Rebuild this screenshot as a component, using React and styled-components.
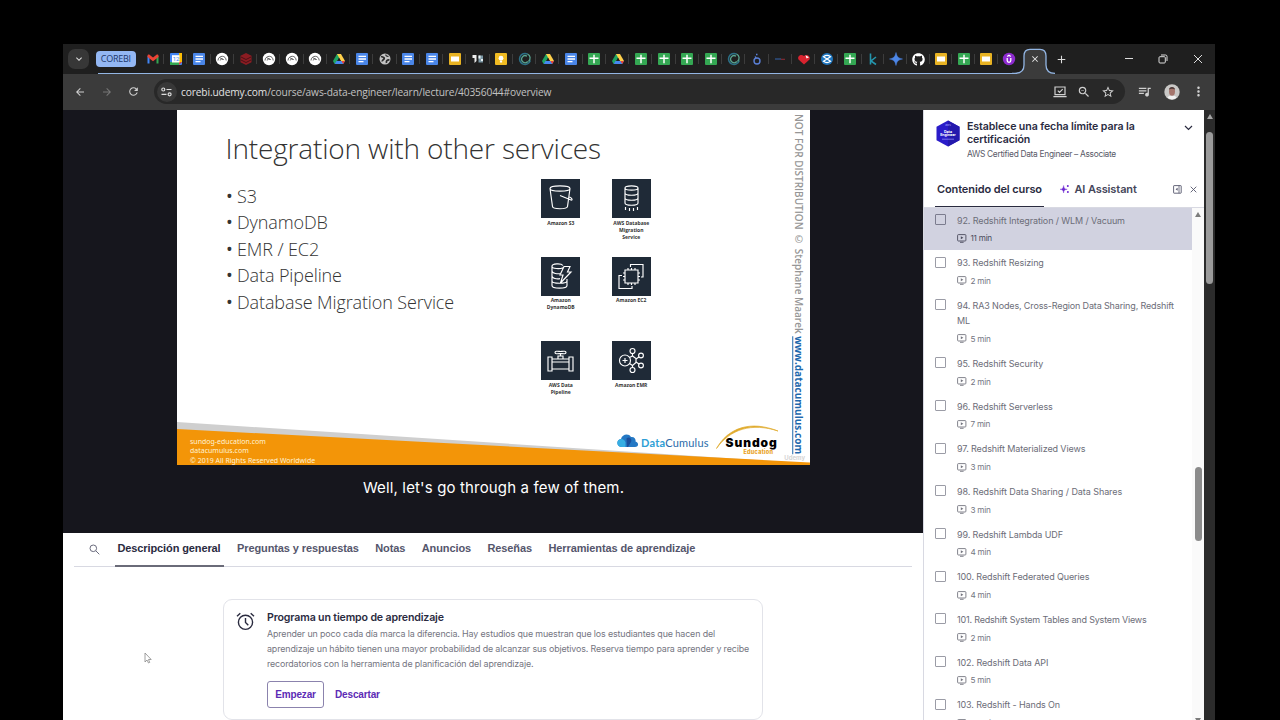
import styled, { createGlobalStyle, css } from "styled-components"
import { FaGithub } from "react-icons/fa"
import {
  MdArrowBack, MdArrowForward, MdRefresh, MdZoomOut, MdStarOutline,
  MdQueueMusic, MdMoreVert, MdKeyboardArrowDown, MdAdd, MdClose,
} from "react-icons/md"

const abas = [
  "gmail", "agenda", "doc", "copa", "cubo", "copa", "copa", "copa", "drive", "doc",
  "globo", "doc", "doc", "slides", "foto", "keep", "espiral", "drive", "doc", "sheet",
  "drive", "sheet", "sheet", "sheet", "sheet", "espiral", "looker", "linha", "coracao", "onda",
  "sheet", "kaggle", "gemini", "github", "slides", "sheet", "slides", "udemy",
]

const aulas = [
  { titulo: "92. Redshift Integration / WLM / Vacuum", min: "11 min", ativa: true },
  { titulo: "93. Redshift Resizing", min: "2 min" },
  { titulo: "94. RA3 Nodes, Cross-Region Data Sharing, Redshift ML", min: "5 min", esp: "-0.150px" },
  { titulo: "95. Redshift Security", min: "2 min" },
  { titulo: "96. Redshift Serverless", min: "7 min" },
  { titulo: "97. Redshift Materialized Views", min: "3 min" },
  { titulo: "98. Redshift Data Sharing / Data Shares", min: "3 min", esp: "-0.070px" },
  { titulo: "99. Redshift Lambda UDF", min: "4 min" },
  { titulo: "100. Redshift Federated Queries", min: "4 min" },
  { titulo: "101. Redshift System Tables and System Views", min: "2 min", esp: "-0.190px" },
  { titulo: "102. Redshift Data API", min: "5 min" },
  { titulo: "103. Redshift - Hands On", min: "22 min" },
]

const secoes = [
  { nome: "Descripción general", ativa: true },
  { nome: "Preguntas y respuestas" },
  { nome: "Notas" },
  { nome: "Anuncios" },
  { nome: "Reseñas" },
  { nome: "Herramientas de aprendizaje" },
]

const servicos = [
  { icone: "s3", nome: "Amazon S3" },
  { icone: "dms", nome: "AWS Database Migration Service" },
  { icone: "dynamo", nome: "Amazon DynamoDB" },
  { icone: "ec2", nome: "Amazon EC2" },
  { icone: "pipeline", nome: "AWS Data Pipeline" },
  { icone: "emr", nome: "Amazon EMR" },
]

const favicons = {
  gmail: (
    <>
      <path d="M1.500 11.500V4l2 1.200v6.300z" fill="#4285f4" />
      <path d="M10.500 11.500V5.200l2-1.200v7.500z" fill="#34a853" />
      <path d="M1.500 4c0-1.500 1.400-1.800 2.300-1L7 5.500 10.200 3c.9-.8 2.300-.5 2.300 1v1L7 9.200 1.500 5z" fill="#ea4335" />
    </>
  ),
  agenda: (
    <>
      <rect x="1" y="1" width="12" height="12" rx="1" fill="#4285f4" />
      <path d="M10 1h3v9h-3z" fill="#fbbc04" />
      <path d="M1 10h9v3H1z" fill="#34a853" />
      <path d="M10 10h3l-3 3z" fill="#ea4335" />
      <rect x="3" y="3.200" width="7.500" height="7.300" fill="#fff" />
      <text x="3.700" y="9.200" fontSize="6" fill="#4285f4" fontFamily="Roboto, sans-serif">12</text>
    </>
  ),
  doc: (
    <>
      <rect x="1" y="1" width="12" height="12" rx="1" fill="#4a86e8" />
      <path d="M3.500 4.300h7.500M3.500 7h7.500M3.500 9.700h5" stroke="#fff" strokeWidth="1.300" />
    </>
  ),
  copa: (
    <>
      <circle cx="7" cy="7" r="6.200" fill="#fff" />
      <path d="M3 8.500C3 6 5 4.300 7.300 4.300S11 6 11.200 8.500M5.200 8.500c.3-2 2.600-2.300 3.600-.5M4.500 5.500L8 7.500" fill="none" stroke="#555" strokeWidth="0.900" />
    </>
  ),
  cubo: (
    <>
      <path d="M7 1l5.500 2.800v6.400L7 13l-5.500-2.800V3.800z" fill="#8c1c22" />
      <path d="M2 5l5 2.500L12 5M2 8l5 2.500L12 8" fill="none" stroke="#4a1116" strokeWidth="1" />
    </>
  ),
  drive: (
    <>
      <path d="M5 2h4L4.500 10.500 2.600 12 1 9z" fill="#1fa463" />
      <path d="M5 2h4l4 7H9z" fill="#ffd04b" />
      <path d="M4.500 9H13l-1.800 3H2.700z" fill="#4688f1" />
      <path d="M9.500 9H13l-1.800 3z" fill="#ea4335" />
      <path d="M7 6l1.700 3H5.300z" fill="#1f1f1f" />
    </>
  ),
  globo: (
    <>
      <circle cx="7" cy="7" r="5.500" fill="#c4c4c4" />
      <path d="M3 4.500c2 .5 3.500.5 3.200 2S4 7.500 4.300 9.500M8.500 11c-.5-2 .5-3.300 3-3" fill="none" stroke="#2c2c2c" strokeWidth="1.700" />
      <path d="M8 2.500c-.5 1.500 1 2 2.500 1.800" fill="none" stroke="#2c2c2c" strokeWidth="1.300" />
    </>
  ),
  slides: (
    <>
      <rect x="1" y="1" width="12" height="12" rx="1" fill="#e8b323" />
      <rect x="3" y="4.500" width="8" height="5" fill="#fff" />
    </>
  ),
  foto: (
    <>
      <path d="M1.500 3h4v6l-2 2V6h-2z" fill="#eee" />
      <path d="M7.500 3.500h4.500v7H7.500z" fill="#7c98a5" />
      <path d="M7.500 3.500h2v3h-2zM10 7h2v2h-2z" fill="#e9f1f4" />
    </>
  ),
  keep: (
    <>
      <rect x="1" y="1" width="12" height="12" rx="1" fill="#f0bb22" />
      <circle cx="7" cy="6.200" r="2.400" fill="#fff" />
      <path d="M5.900 8.600h2.200v1.900H5.900z" fill="#fff" />
    </>
  ),
  espiral: (
    <>
      <path d="M9.500 2A5.500 5.500 0 1 0 12.300 8.500" fill="none" stroke="#2b6f86" strokeWidth="1.500" />
      <path d="M9 4.200A3.500 3.500 0 1 0 9.800 9.500M9.500 2c3 1.500 3.500 5 1 7.500" fill="none" stroke="#5aa590" strokeWidth="1.300" />
    </>
  ),
  sheet: (
    <>
      <rect x="1" y="1" width="12" height="12" rx="1" fill="#34a853" />
      <path d="M2.500 6.200h9M7 2.800v8.400" stroke="#fff" strokeWidth="1.500" />
    </>
  ),
  looker: (
    <>
      <circle cx="7" cy="9" r="3" fill="none" stroke="#5a7fd6" strokeWidth="1.400" />
      <path d="M6 6.200L5.200 4.500M6 2.500h1.500" stroke="#5a7fd6" strokeWidth="1.500" />
    </>
  ),
  linha: (
    <>
      <path d="M2 7h6" stroke="#31568f" strokeWidth="1.300" />
      <path d="M8 7.300h4" stroke="#8a2d36" strokeWidth="1.100" />
    </>
  ),
  coracao: (
    <>
      <path d="M7 12.500L1.500 7.500C0 4.500 3.500 1.500 7 4c3-2.500 7 .5 5.500 3.500z" fill="#d8232f" />
      <path d="M8.500 3.200l3.500 2L9.500 6.500z" fill="#fff" />
    </>
  ),
  onda: (
    <>
      <circle cx="7" cy="7" r="6" fill="#1f77c0" />
      <path d="M3.500 4.800c2-1.500 5-1.500 7 0L7 7zM3.500 9.200c2 1.500 5 1.500 7 0L7 7z" fill="none" stroke="#fff" strokeWidth="1.200" />
    </>
  ),
  kaggle: <path d="M4.500 1.500v11M10 5L5 9l5 3.500" fill="none" stroke="#2596ad" strokeWidth="1.600" />,
  gemini: <path d="M7 .5C7.900 4.800 9.200 6.100 13.500 7 9.200 7.900 7.900 9.200 7 13.500 6.100 9.200 4.800 7.900.5 7 4.800 6.100 6.100 4.800 7 .5z" fill="#4d87e8" stroke="#4d87e8" strokeWidth="0.500" />,
  udemy: (
    <>
      <circle cx="7" cy="7" r="6.200" fill="#8e2bd0" />
      <path d="M5.200 6v2.500c0 2.400 3.600 2.400 3.600 0V6M5.200 4.500L7 3.300l1.800 1.200" fill="none" stroke="#fff" strokeWidth="1.300" />
    </>
  ),
}

const desenhos = {
  s3: <path d="M9 9.500l2.500 18c.2 3 14.500 3 15 0L29 9.500M9 9.500c0-3.500 20-3.500 20 0s-20 3.500-20 0zM19 16.500l11 4.500c2 .6 1-2-1.500-3" />,
  dms: <path d="M13 9c0-2.800 13-2.800 13 0s-13 2.800-13 0zv15c0 3 13 3 13 0V9M13 14c0 3 13 3 13 0M13 19c0 3 13 3 13 0M13.500 28v3M17.500 29v3M21.500 29v3M25.500 28v3" />,
  dynamo: <path d="M22 8.500c-2-2.500-11-2-11 .7s8 3 11 1.500M11 9v19.500c0 3.500 15 3.500 15 0V22M11 14c0 2.500 6 3.200 9 2.500M11 19c0 2.500 5 3.200 8 2.600M11 24c0 3 15 3 15 0M23 9.500h6L26.500 15H30L19.500 26l2.500-8h-3z" />,
  ec2: <path d="M13 13h13v13H13zM16 13v-2M19.500 13v-2M23 13v-2M16 28v-2M19.500 28v-2M23 28v-2M13 16h-2M13 19.500h-2M13 23h-2M28 16h-2M28 19.500h-2M28 23h-2M18.500 10V7.500H31V20h-2M10 18.500H7v13h13V29" />,
  pipeline: <path d="M7 16h4v14H7zM28 16h4v14h-4zM11 18h17M11 28h17M11 21h17M17 18v-3h5v3M19.500 15v-3M14 11.500c0-2 4-1 5.500-1s5.500-1 5.500 1-4 1-5.500 1-5.500 1-5.500-1z" />,
  emr: <><circle cx="13" cy="19.500" r="5.500" /><path d="M13 17v5M10.500 19.500h5M20.500 12.500v2.500M20.500 24.500v2M24 18l3-2M24 21l3 2" /><path d="M17.500 16.500l3-1.500 3.500 2.500v4L20.500 24.500l-3-2" /><circle cx="20.500" cy="10" r="2.500" /><circle cx="20.500" cy="29" r="2.500" /><circle cx="29" cy="14.500" r="2.400" /><circle cx="29" cy="24.500" r="2.400" /></>,
}

function Favicon({ tipo }) {
  if (tipo === "github") return <FaGithub size={13} color="#fff" />
  return <svg width="14" height="14" viewBox="0 0 14 14">{favicons[tipo]}</svg>
}

function IconeVideo() {
  return (
    <svg width="10" height="9" viewBox="0 0 10 9" fill="none" stroke="currentColor">
      <rect x="0.600" y="0.600" width="8.300" height="6.400" rx="0.800" strokeWidth="0.900" />
      <path d="M3.800 2.300v3l2.600-1.500z" fill="currentColor" stroke="none" />
      <path d="M3 8.300h3.600" strokeWidth="0.900" />
    </svg>
  )
}

function Navegador() {
  return (
    <>
      <FaixaAbas>
        <BotaoBusca><MdKeyboardArrowDown size={12} /></BotaoBusca>
        <Grupo>COREBI</Grupo>
        <ListaAbas>
          {abas.map((tipo, i) => (
            <Aba key={i}><Favicon tipo={tipo} /></Aba>
          ))}
        </ListaAbas>
        <AbaAtiva>
          <Contorno width="46" height="26" viewBox="0 0 46 26">
            <path d="M0 25.300H3Q12 25.300 12 17V8Q12 1.300 18 1.300H28Q34 1.300 34 8V17Q34 25.300 43 25.300V26H0z" fill="#3b3b3b" />
            <path d="M0 25.300H3Q12 25.300 12 17V8Q12 1.300 18 1.300H28Q34 1.300 34 8V17Q34 25.300 43 25.300" fill="none" stroke="#93b6e4" strokeWidth="1.300" />
          </Contorno>
          <Fechar size={10} />
        </AbaAtiva>
        <NovaAba><MdAdd size={13} /></NovaAba>
        <Janela>
          <svg width="10" height="10" viewBox="0 0 10 10"><path d="M1 4.500h8" stroke="#ddd" /></svg>
          <svg width="10" height="10" viewBox="0 0 10 10" fill="none" stroke="#ddd">
            <rect x="1" y="2.700" width="6.300" height="6.300" rx="1" />
            <path d="M3 1h4.500Q9 1 9 2.500V7" />
          </svg>
          <svg width="10" height="10" viewBox="0 0 10 10"><path d="M1 1l8 8M9 1l-8 8" stroke="#ddd" /></svg>
        </Janela>
      </FaixaAbas>
      <BarraEndereco>
        <Navegacao>
          <MdArrowBack size={12} />
          <MdArrowForward size={12} color="#777" />
          <MdRefresh size={13} />
        </Navegacao>
        <Endereco>
          <Site>
            <svg width="11" height="10" viewBox="0 0 11 10" fill="none" stroke="#ddd" strokeWidth="1.200">
              <circle cx="2.300" cy="2.500" r="1.500" />
              <path d="M5.500 2.500h5M.5 7.300h5" />
              <circle cx="8.600" cy="7.300" r="1.500" />
            </svg>
          </Site>
          <Url><b>corebi.udemy.com</b>/course/aws-data-engineer/learn/lecture/40356044#overview</Url>
          <Acoes>
            <svg width="14" height="12" viewBox="0 0 14 12" fill="none" stroke="#d0d0d0" strokeWidth="1.200">
              <path d="M2 1h10v7.600H2zM.4 10.700h13.200M4.800 4.600L6.500 6.300l3.200-3.200" />
            </svg>
            <MdZoomOut size={14} />
            <MdStarOutline size={14} />
          </Acoes>
        </Endereco>
        <Perfil>
          <MdQueueMusic size={15} />
          <svg width="16" height="16" viewBox="0 0 16 16">
            <circle cx="8" cy="8" r="7.700" fill="#c9c8c6" />
            <path d="M3.500 13.800c1-3 8-3 9 0a7.700 7.700 0 0 1-9 0z" fill="#f1f1f1" />
            <ellipse cx="8" cy="7.500" rx="3" ry="4.200" fill="#a5756c" />
            <path d="M5 5.500C5 2 11 2 11 5.500 9 4.500 7 4.500 5 5.500z" fill="#4b3a38" />
          </svg>
          <MdMoreVert size={15} />
        </Perfil>
      </BarraEndereco>
    </>
  )
}

function Slide() {
  return (
    <SlideCaixa>
      <Faixas width="632" height="43" viewBox="0 0 632 43" preserveAspectRatio="none">
        <path d="M0 0L632 41.500V43H0z" fill="#cfcfcf" />
        <path d="M0 7L632 40.500V43H0z" fill="#f39508" />
      </Faixas>
      <SlideConteudo>
        <SlideTitulo>Integration with other services</SlideTitulo>
        <SlideCorpo>
          <Lista>
            <li>S3</li>
            <li>DynamoDB</li>
            <li>EMR / EC2</li>
            <li>Data Pipeline</li>
            <li>Database Migration Service</li>
          </Lista>
          <Servicos>
            {servicos.map((s) => (
              <Servico key={s.nome}>
                <Quadro>
                  <svg width="39" height="39" viewBox="0 0 39 39" fill="none" stroke="#fff" strokeWidth="1.150">{desenhos[s.icone]}</svg>
                </Quadro>
                <NomeServico>{s.nome}</NomeServico>
              </Servico>
            ))}
          </Servicos>
        </SlideCorpo>
        <SlideRodape>
          <Creditos>
            sundog-education.com<br />datacumulus.com<br />© 2019 All Rights Reserved Worldwide
          </Creditos>
          <Nuvem width="22" height="15" viewBox="0 0 22 15">
            <path d="M5 14C-1 14-1 6.500 4 6 5 1 12 0 14 4c4-.5 5 3 4.500 4.500C22 9.500 22 14 18 14z" fill="#2478c4" />
            <path d="M5 14C-1 14-1 6.500 4 6c2.500 0 4 1.500 4.500 3.500V14z" fill="#36aee3" />
            <path d="M9.500 5.500c2.500-2.500 6 .5 4.500 3.500L11 14h-1z" fill="#1b4f9c" />
          </Nuvem>
          <DataCumulus><b>Data</b>Cumulus</DataCumulus>
          <Sundog>
            <Arco width="64" height="26" viewBox="0 0 64 26">
              <path d="M.5 24.500C12 4 34-4 62 7 36-1.500 14 5 .5 24.500z" fill="#e0ab2c" stroke="#e0ab2c" strokeWidth="0.700" />
            </Arco>
            <strong>Sundog</strong>
            <small>Education</small>
          </Sundog>
        </SlideRodape>
      </SlideConteudo>
      <MarcaDagua>
        NOT FOR DISTRIBUTION © Stephane Maarek <a>www.datacumulus.com</a>
      </MarcaDagua>
      <MarcaUdemy>Udemy</MarcaUdemy>
    </SlideCaixa>
  )
}

function Recordatorio() {
  return (
    <Cartao>
      <svg width="19" height="19" viewBox="0 0 19 19" fill="none" stroke="#2a2b3f" strokeWidth="1.400">
        <circle cx="9.500" cy="10.300" r="7.100" />
        <path d="M9.500 6v4.500l2.800 2.800M1 4.300L4.300 1.200M18 4.300l-3.300-3.100" />
      </svg>
      <CartaoTexto>
        <CartaoTitulo>Programa un tiempo de aprendizaje</CartaoTitulo>
        <Descricao>
          Aprender un poco cada día marca la diferencia. Hay estudios que muestran que los estudiantes que hacen del<br />
          aprendizaje un hábito tienen una mayor probabilidad de alcanzar sus objetivos. Reserva tiempo para aprender y recibe<br />
          recordatorios con la herramienta de planificación del aprendizaje.
        </Descricao>
        <Botoes>
          <Botao $borda>Empezar</Botao>
          <Botao>Descartar</Botao>
        </Botoes>
      </CartaoTexto>
    </Cartao>
  )
}

function Lateral() {
  return (
    <LateralCaixa>
      <Meta>
        <svg width="24" height="27" viewBox="0 0 24 27">
          <path d="M12 .5l11.500 6.300v13.400L12 26.500.5 20.200V6.800z" fill="#2a1cc9" />
          <path d="M12 .5l11.500 6.300v13.400L12 26.500z" fill="#2419ad" />
          <text x="12" y="6" textAnchor="middle" fontSize="3" fill="#a9a4ff" fontFamily="Inter, sans-serif">aws</text>
          <text x="12" y="12.500" textAnchor="middle" fontSize="3.600" fontWeight="700" fill="#fff" fontFamily="Inter, sans-serif">Data</text>
          <text x="12" y="16" textAnchor="middle" fontSize="3.600" fontWeight="700" fill="#fff" fontFamily="Inter, sans-serif">Engineer</text>
          <path d="M6 19.200h12" stroke="#8f89f5" strokeWidth="0.800" />
        </svg>
        <MetaTexto>
          <MetaTitulo>Establece una fecha límite para la certificación</MetaTitulo>
          <MetaSub>AWS Certified Data Engineer – Associate</MetaSub>
        </MetaTexto>
        <svg width="9" height="6" viewBox="0 0 9 6" fill="none" stroke="#2a2b3f" strokeWidth="1.200"><path d="M1 1l3.500 3.500L8 1" /></svg>
      </Meta>
      <LateralAbas>
        <LateralAba $ativa>Contenido del curso</LateralAba>
        <LateralAba>
          <svg width="10" height="10" viewBox="0 0 10 10" fill="#6d28d2">
            <path d="M3.600 1.500C4 4.300 4.500 4.900 7.200 5.300 4.500 5.700 4 6.300 3.600 9 3.200 6.300 2.700 5.700 0 5.300c2.700-.4 3.200-1 3.600-3.800z" stroke="#6d28d2" strokeWidth="0.400" />
            <circle cx="7.800" cy="2" r="1" /><circle cx="7.900" cy="8" r="1" />
          </svg>
          AI Assistant
        </LateralAba>
        <LateralBotoes>
          <svg width="9" height="9" viewBox="0 0 9 9" fill="none" stroke="#55566c">
            <rect x="0.600" y="0.600" width="7.600" height="7.600" rx="0.500" strokeWidth="0.900" />
            <path d="M6 .6v7.600" strokeWidth="0.800" />
            <path d="M4.600 2.800v3L2.600 4.300z" fill="#55566c" stroke="none" />
          </svg>
          <svg width="7" height="7" viewBox="0 0 7 7" stroke="#55566c" strokeWidth="0.900"><path d="M.7.7l5.600 5.600M6.300.7L.7 6.300" /></svg>
        </LateralBotoes>
      </LateralAbas>
      <LateralCorpo>
        <Aulas>
          {aulas.map((aula) => (
            <Aula key={aula.titulo} $ativa={aula.ativa}>
              <Caixinha $ativa={aula.ativa} />
              <div>
                <AulaTitulo $esp={aula.esp}>{aula.titulo}</AulaTitulo>
                <AulaMin $ativa={aula.ativa}><IconeVideo />{aula.min}</AulaMin>
              </div>
            </Aula>
          ))}
        </Aulas>
        <Rolagem>
          <Seta $cor="#7d7d7d" />
          <Polegar $topo="250px" $altura="74px" $cor="#8b8b8b" />
          <SetaBaixo />
        </Rolagem>
      </LateralCorpo>
    </LateralCaixa>
  )
}

export default function App() {
  return (
    <Tela>
      <Global />
      <JanelaCaixa>
        <Navegador />
        <Pagina>
          <Principal>
            <Video>
              <Slide />
              <Legenda>Well, let's go through a few of them.</Legenda>
            </Video>
            <Secoes>
              <Lupa width="11" height="11" viewBox="0 0 11 11" fill="none" stroke="#6a6b7d">
                <circle cx="4.300" cy="4.300" r="3.300" /><path d="M6.800 6.800l3.500 3.500" />
              </Lupa>
              {secoes.map((s) => (
                <Secao key={s.nome} $ativa={s.ativa}>{s.nome}</Secao>
              ))}
            </Secoes>
            <Recordatorio />
          </Principal>
          <Lateral />
          <Rolagem $escura>
            <Seta $cor="#a5a5a5" />
            <Polegar $topo="13px" $altura="152px" $cor="#9b9b9b" />
          </Rolagem>
        </Pagina>
      </JanelaCaixa>
      <Cursor width="8" height="12" viewBox="0 0 8 12">
        <path d="M1 1v9l2-2 1.500 3 1.200-.6L4.500 7.500H7.200z" fill="#fff" stroke="#888" strokeWidth="0.800" />
      </Cursor>
    </Tela>
  )
}

const Global = createGlobalStyle`
  * {
    box-sizing: border-box;
  }
  body {
    margin: 0;
    background: #000;
  }
  svg {
    display: block;
    flex-shrink: 0;
  }
`

const Tela = styled.div`
  position: relative;
  width: 1280px;
  height: 720px;
  padding: 44px 65px 0 63px;
  overflow: hidden;
  background: #000;
  font-family: Inter, "Liberation Sans", sans-serif;
`

const JanelaCaixa = styled.div`
  display: flex;
  flex-direction: column;
  height: 676px;
  background: #3b3b3b;
`

const FaixaAbas = styled.div`
  position: relative;
  display: flex;
  align-items: center;
  flex-shrink: 0;
  height: 30px;
  padding-left: 5px;
  background: #1f1f1f;
  &::after {
    content: "";
    position: absolute;
    left: 35px;
    bottom: 0;
    width: 916px;
    height: 1.300px;
    background: #93b6e4;
  }
`

const BotaoBusca = styled.div`
  display: flex;
  align-items: center;
  justify-content: center;
  width: 21px;
  height: 20px;
  border-radius: 7px;
  background: #373737;
  color: #ddd;
`

const Grupo = styled.div`
  width: 39.500px;
  height: 16px;
  margin: 0 5.400px 0 7px;
  border-radius: 4px;
  background: #93b7f3;
  color: #20386b;
  font-family: "Open Sans", sans-serif;
  font-size: 9px;
  line-height: 16px;
  text-align: center;
  letter-spacing: -0.300px;
`

const ListaAbas = styled.div`
  display: flex;
  width: 880.700px;
`

const Aba = styled.div`
  display: flex;
  flex-shrink: 0;
  align-items: center;
  justify-content: center;
  position: relative;
  width: 23.250px;
  height: 14px;
  &:nth-child(n + 32) {
    width: 22.700px;
  }
  &:not(:last-child)::after {
    content: "";
    position: absolute;
    right: 0;
    top: 2px;
    width: 1px;
    height: 10px;
    background: #3c3c3c;
  }
`

const AbaAtiva = styled.div`
  position: relative;
  display: flex;
  align-items: center;
  justify-content: center;
  width: 26px;
  height: 30px;
`

const Contorno = styled.svg`
  position: absolute;
  left: -10px;
  bottom: 0;
  z-index: 1;
`

const Fechar = styled(MdClose)`
  position: relative;
  z-index: 2;
  color: #eee;
`

const NovaAba = styled.div`
  margin-left: 7px;
  color: #ddd;
`

const Janela = styled.div`
  display: flex;
  gap: 24.300px;
  margin-left: auto;
  margin-right: 12.500px;
`

const BarraEndereco = styled.div`
  display: flex;
  align-items: center;
  flex-shrink: 0;
  height: 35.500px;
  padding-left: 11px;
  color: #d0d0d0;
`

const Navegacao = styled.div`
  display: flex;
  align-items: center;
  gap: 14.500px;
  width: 80px;
`

const Endereco = styled.div`
  display: flex;
  align-items: center;
  width: 971px;
  height: 25px;
  padding: 0 10px 0 2.500px;
  border-radius: 13px;
  background: #282828;
`

const Site = styled.div`
  display: flex;
  align-items: center;
  justify-content: center;
  width: 20px;
  height: 20px;
  border-radius: 50%;
  background: #383838;
`

const Url = styled.div`
  margin-left: 4.500px;
  font-family: "Open Sans", sans-serif;
  font-size: 10.200px;
  letter-spacing: -0.130px;
  color: #c2c2c2;
  white-space: nowrap;
  b {
    font-weight: 400;
    color: #e3e3e3;
  }
`

const Acoes = styled.div`
  display: flex;
  align-items: center;
  gap: 10px;
  margin-left: auto;
`

const Perfil = styled.div`
  display: flex;
  align-items: center;
  gap: 11.500px;
  margin-left: 12px;
`

const Pagina = styled.div`
  display: flex;
  flex: 1;
  min-height: 0;
`

const Principal = styled.main`
  width: 860px;
  background: #fff;
`

const Video = styled.div`
  display: flex;
  flex-direction: column;
  align-items: center;
  height: 423px;
  padding-left: 1px;
  background: #16161d;
`

const SlideCaixa = styled.div`
  position: relative;
  display: flex;
  width: 633px;
  height: 355.500px;
  background: #fff;
`

const Faixas = styled.svg`
  position: absolute;
  left: 0;
  bottom: 0;
  width: 100%;
`

const SlideConteudo = styled.div`
  position: relative;
  display: flex;
  flex-direction: column;
  width: 614px;
`

const SlideTitulo = styled.h1`
  margin: 18.500px 0 0 48.500px;
  font-family: "Open Sans", sans-serif;
  font-size: 28px;
  line-height: 40px;
  font-weight: 300;
  letter-spacing: -0.160px;
  color: #333;
  white-space: nowrap;
`

const SlideCorpo = styled.div`
  display: flex;
  flex: 1;
  padding-top: 11px;
`

const Lista = styled.ul`
  width: 348.500px;
  margin: 3.500px 0 0;
  padding: 0 0 0 60px;
  font-family: "Open Sans", sans-serif;
  font-size: 18px;
  font-weight: 300;
  line-height: 26.600px;
  letter-spacing: -0.110px;
  color: #333;
  list-style: none;
  white-space: nowrap;
  li::before {
    content: "•";
    display: inline-block;
    width: 11px;
    margin-left: -11px;
    font-weight: 400;
  }
`

const Servicos = styled.div`
  display: grid;
  grid-template-columns: 70.500px 70.500px;
  grid-template-rows: 77.500px 84.500px 60px;
`

const Servico = styled.div`
  display: flex;
  flex-direction: column;
  align-items: center;
`

const Quadro = styled.div`
  width: 39px;
  height: 39px;
  background: #1f2a37;
`

const NomeServico = styled.div`
  width: 38px;
  margin-top: 1.500px;
  font-family: "Open Sans", sans-serif;
  font-size: 5px;
  font-weight: 700;
  line-height: 7px;
  text-align: center;
  color: #333;
`

const SlideRodape = styled.div`
  display: flex;
  align-items: flex-start;
  height: 46px;
`

const Creditos = styled.div`
  width: 427px;
  margin: 17.500px 0 0 13px;
  font-family: "Noto Sans", sans-serif;
  font-size: 7px;
  line-height: 9.600px;
  color: #fff3d4;
`

const Nuvem = styled.svg`
  margin-top: 14px;
`

const DataCumulus = styled.div`
  width: 69px;
  margin: 16px 6px 0 2px;
  font-family: Lato, sans-serif;
  font-size: 11px;
  line-height: 15px;
  letter-spacing: 0.200px;
  color: #2a6aa9;
  b {
    color: #2f9fd6;
  }
`

const Sundog = styled.div`
  position: relative;
  display: flex;
  flex-direction: column;
  width: 64px;
  padding-left: 9.500px;
  strong {
    margin-top: 16px;
    font-family: Inter, sans-serif;
    font-size: 12px;
    font-weight: 900;
    line-height: 15px;
    letter-spacing: 0.950px;
    color: #000;
  }
  small {
    margin: -1px 0 0 18px;
    font-size: 5.500px;
    font-weight: 800;
    line-height: 6px;
    letter-spacing: 0.250px;
    color: #e9a21b;
  }
`

const Arco = styled.svg`
  position: absolute;
  left: 0;
  top: 5px;
`

const MarcaDagua = styled.div`
  position: relative;
  writing-mode: vertical-rl;
  padding-top: 4px;
  font-family: "Open Sans", sans-serif;
  font-size: 10px;
  font-weight: 600;
  line-height: 15px;
  color: #969696;
  white-space: nowrap;
  a {
    font-weight: 700;
    color: #1d68ad;
    text-decoration: underline;
  }
`

const MarcaUdemy = styled.div`
  position: absolute;
  right: 5px;
  bottom: 3px;
  font-size: 6px;
  line-height: 8px;
  font-weight: 700;
  color: #d5d5d5;
`

const Legenda = styled.p`
  margin: 12.500px 0 0;
  font-size: 15px;
  line-height: 20px;
  letter-spacing: 0.150px;
  color: #fff;
`

const Secoes = styled.nav`
  display: flex;
  gap: 16.500px;
  height: 34px;
  margin: 0 11px;
  padding-left: 15px;
  border-bottom: 1px solid #d8d9e2;
`

const Lupa = styled.svg`
  margin: 11px 1px 0 0;
`

const Secao = styled.div`
  height: 34px;
  font-family: "Liberation Sans", sans-serif;
  font-size: 11px;
  font-weight: 700;
  line-height: 31px;
  letter-spacing: -0.110px;
  color: #55566c;
  white-space: nowrap;
  ${(p) => p.$ativa && css`
    margin: 0 -3px;
    padding: 0 3px;
    color: #2a2b3f;
    border-bottom: 2px solid #6a6b78;
  `}
`

const Cartao = styled.section`
  display: flex;
  gap: 12px;
  width: 540px;
  height: 121px;
  margin: 32px 0 0 160px;
  padding: 12px;
  border: 1px solid #e2e3e9;
  border-radius: 9px;
`

const CartaoTexto = styled.div`
  flex: 1;
`

const CartaoTitulo = styled.h2`
  margin: -2px 0 0;
  font-size: 10.600px;
  font-weight: 600;
  line-height: 15px;
  letter-spacing: -0.140px;
  color: #2a2b3f;
`

const Descricao = styled.p`
  margin: 1.500px 0 0;
  font-size: 8.900px;
  line-height: 15px;
  letter-spacing: -0.130px;
  color: #74757f;
  white-space: nowrap;
`

const Botoes = styled.div`
  display: flex;
  gap: 11px;
  margin-top: 9.500px;
`

const Botao = styled.button`
  height: 27px;
  padding: 0;
  border: none;
  background: none;
  font-family: "Liberation Sans", sans-serif;
  font-size: 10px;
  font-weight: 700;
  letter-spacing: -0.150px;
  color: #5c2bb5;
  ${(p) => p.$borda && css`
    width: 57px;
    border: 1px solid #8b83ad;
    border-radius: 3px;
  `}
`

const LateralCaixa = styled.aside`
  display: flex;
  flex-direction: column;
  width: 281px;
  border-left: 1px solid #d8d9e2;
  background: #fff;
`

const Meta = styled.div`
  display: flex;
  gap: 7px;
  height: 62px;
  padding: 10.500px 11.500px 0 12px;
  > svg:last-child {
    margin-top: 5px;
  }
`

const MetaTexto = styled.div`
  flex: 1;
`

const MetaTitulo = styled.div`
  width: 180px;
  font-size: 10.600px;
  font-weight: 600;
  line-height: 13px;
  letter-spacing: -0.100px;
  color: #2a2b3f;
`

const MetaSub = styled.div`
  margin-top: 2px;
  font-size: 8.400px;
  line-height: 12px;
  letter-spacing: -0.310px;
  color: #595a68;
`

const LateralAbas = styled.div`
  display: flex;
  align-items: center;
  height: 36px;
  padding: 0 7.500px 0 10.500px;
  border-bottom: 1px solid #d8d9e2;
`

const LateralAba = styled.div`
  display: flex;
  align-items: center;
  gap: 4px;
  height: 36px;
  padding: 0 2.500px;
  margin-right: 13.500px;
  font-size: 11px;
  font-weight: 600;
  letter-spacing: -0.110px;
  color: #45465a;
  white-space: nowrap;
  ${(p) => p.$ativa && css`
    color: #2a2b3f;
    box-shadow: inset 0 -1px #2a2b3f;
  `}
`

const LateralBotoes = styled.div`
  display: flex;
  align-items: center;
  gap: 8px;
  margin-left: auto;
`

const LateralCorpo = styled.div`
  display: flex;
  flex: 1;
  min-height: 0;
`

const Aulas = styled.div`
  flex: 1;
  overflow: hidden;
`

const Aula = styled.div`
  display: flex;
  gap: 11px;
  min-height: 42.700px;
  padding: 5px 10px 5.900px 11px;
  background: ${(p) => (p.$ativa ? "#d1d2e0" : "transparent")};
`

const Caixinha = styled.div`
  flex-shrink: 0;
  width: 11px;
  height: 11px;
  margin-top: 1.500px;
  border: 1px solid ${(p) => (p.$ativa ? "#7b7c8e" : "#9b9ca6")};
  border-radius: 1px;
`

const AulaTitulo = styled.div`
  font-size: 9px;
  line-height: 15.300px;
  letter-spacing: ${(p) => p.$esp || "-0.110px"};
  color: #6c6d78;
`

const AulaMin = styled.div`
  display: flex;
  align-items: center;
  gap: 3.500px;
  height: 12px;
  margin-top: 4.500px;
  font-size: 8.200px;
  letter-spacing: -0.250px;
  color: ${(p) => (p.$ativa ? "#4a4b5c" : "#74757f")};
`

const Rolagem = styled.div`
  display: flex;
  flex-direction: column;
  align-items: center;
  flex-shrink: 0;
  width: ${(p) => (p.$escura ? "11px" : "12px")};
  overflow: hidden;
  background: ${(p) => (p.$escura ? "#2b2b2b" : "#fafafa")};
`

const Seta = styled.div`
  margin-top: 4px;
  border-left: 3.500px solid transparent;
  border-right: 3.500px solid transparent;
  border-bottom: 5px solid ${(p) => p.$cor};
`

const SetaBaixo = styled.div`
  margin-top: auto;
  margin-bottom: -3px;
  border-left: 3.500px solid transparent;
  border-right: 3.500px solid transparent;
  border-top: 5px solid #7d7d7d;
`

const Polegar = styled.div`
  flex-shrink: 0;
  width: 7px;
  height: ${(p) => p.$altura};
  margin-top: ${(p) => p.$topo};
  border-radius: 4px;
  background: ${(p) => p.$cor};
`

const Cursor = styled.svg`
  position: absolute;
  left: 144px;
  top: 652px;
`
